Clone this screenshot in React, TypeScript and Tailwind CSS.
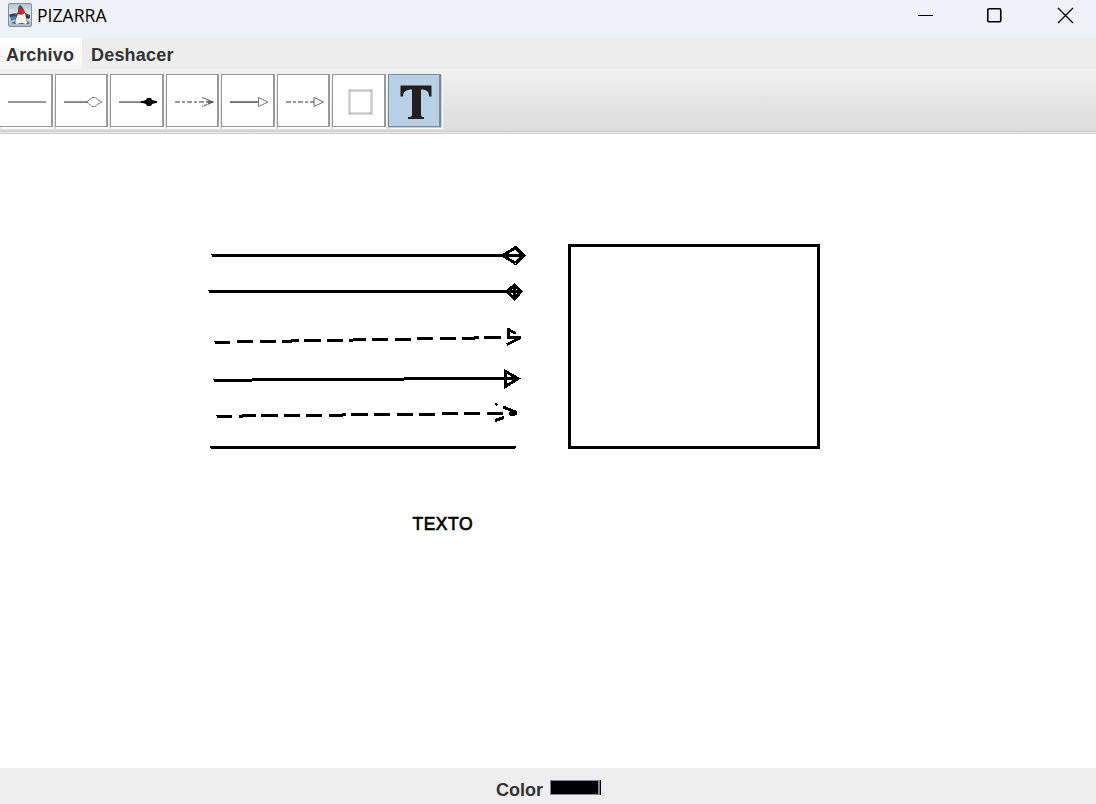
import React from "react";

function DukeIcon() {
  return (
    <svg width="24" height="24" viewBox="0 0 24 24" className="block shrink-0">
      <defs>
        <linearGradient id="sky" x1="0" y1="0" x2="0" y2="1">
          <stop offset="0" stopColor="#b3c3cf" />
          <stop offset="0.5" stopColor="#e4ebf0" />
          <stop offset="1" stopColor="#a5b5c2" />
        </linearGradient>
      </defs>
      <rect x="0.5" y="0.5" width="23" height="23" rx="1" fill="url(#sky)" stroke="#7894ad" />
      <path d="M2 13l5-2 1 5-5 2z" fill="#3c86ad" />
      <path d="M1 11.5l7-1.5-1 3-5 1z" fill="#39444b" />
      <path d="M12 2c2 1 4 4 5 8l5 2v3l-4-1 2 7H6l2-7-2-1 4-4c0-4 0-6 2-7z" fill="#4a4d4d" />
      <path d="M10 11c3 1 4 1 7-1l2 10c-1 2-3 0-5 0s-4 1-6 1c-2-2 1-7 2-10z" fill="#f1f1ee" />
      <path d="M18 12l4 2-1 2-3-1z" fill="#343434" />
      <circle cx="13.7" cy="8.5" r="2.7" fill="#e91e20" />
      <path d="M3 20l4-2v3zM19 18l3 2-2 1z" fill="#66747d" />
    </svg>
  );
}

const iconProps = { width: 52, height: 52, viewBox: "0 0 52 52", className: "block" };

function Tool({ selected = false, first = false, wide = false, children }: { selected?: boolean; first?: boolean; wide?: boolean; children: React.ReactNode }) {
  return (
    <button
      className={
        "block h-[53px] shrink-0 overflow-hidden border-y border-r-2 " +
        (wide ? "w-[54px] " : "w-[53px] ") +
        (first ? "" : "border-l ") +
        (selected
          ? "border-[#7a8a99] bg-[#b8cfe5] shadow-[1px_1px_0_#b8cfe5,2px_2px_0_#ffffff]"
          : "border-[#999999] bg-white shadow-[1px_2px_0_#ffffff]")
      }
    >
      {children}
    </button>
  );
}

function Toolbar() {
  return (
    <div className="flex h-[65px] shrink-0 bg-linear-to-b from-[#f1f1f1] to-[#dadada] pt-[5px] shadow-[inset_0_-1px_0_#cccccc,inset_0_-2px_0_#eeeeee,inset_0_-3px_0_#cccccc]">
      <div className="flex items-start">
        <Tool first>
          <svg {...iconProps}><path d="M8 27h38" stroke="#999" strokeWidth="2" shapeRendering="crispEdges" /></svg>
        </Tool>
        <div className="ml-[2px]"><Tool>
          <svg {...iconProps}>
            <path d="M8 27h23" stroke="#999" strokeWidth="2" shapeRendering="crispEdges" />
            <path d="M8 27.5h23" stroke="#777" strokeDasharray="3 1" />
            <path d="M30.5 27l3-2 2.5-2.5h3l3 2.5 4 2-4 2-3 2.5h-3l-2.5-2.5z" fill="#fff" stroke="#666" strokeDasharray="3 .5" />
          </svg>
        </Tool></div>
        <div className="ml-[2px]"><Tool wide>
          <svg {...iconProps}>
            <path d="M8 27h23" stroke="#999" strokeWidth="2" shapeRendering="crispEdges" />
            <path d="M8 27.5h23" stroke="#777" strokeDasharray="3 1" />
            <path d="M30 26h2l3-1 1-2h4l1 2 4 1h1v2h-1l-4 1-1 2h-4l-1-2-3-1h-2z" fill="#000" />
          </svg>
        </Tool></div>
        <div className="ml-[2px]"><Tool>
          <svg {...iconProps}>
            <path d="M8 27h32" stroke="#999" strokeWidth="2" strokeDasharray="5 2 3 2" />
            <path d="M35 22.5l11 4.5-11 4.5M39 27h7" fill="none" stroke="#777" strokeWidth="1.3" strokeDasharray="4 .5" />
            <path d="M41 26l5 1-5 1" fill="none" stroke="#555" />
          </svg>
        </Tool></div>
        <div className="ml-[2px]"><Tool wide>
          <svg {...iconProps}>
            <path d="M8 27h29" stroke="#888" strokeWidth="2" shapeRendering="crispEdges" />
            <path d="M8 27.5h29" stroke="#666" strokeDasharray="3 1" />
            <path d="M36.5 22.5v9l9.5-4.5z" fill="#fff" stroke="#777" />
          </svg>
        </Tool></div>
        <div className="ml-[2px]"><Tool>
          <svg {...iconProps}>
            <path d="M8 27h28" stroke="#777" strokeWidth="1.6" strokeDasharray="5 2 3 2" />
            <path d="M36 22.5v9l9.5-4.5z" fill="#fff" stroke="#666" />
          </svg>
        </Tool></div>
        <div className="ml-[2px]"><Tool wide>
          <svg {...iconProps}>
            <rect x="16.5" y="15.5" width="22" height="23" fill="none" stroke="#ccc" strokeWidth="2.5" />
            <path d="M16 15.5h2M37 15.5h2M16 38.5h2M37 38.5h2" stroke="#aaa" />
          </svg>
        </Tool></div>
        <div className="ml-[2px]"><Tool selected>
          <svg {...iconProps}>
            <path d="M11.5 10.5h31v11h-2.5c0-5-2-7-8-7v25c0 2 1 2.5 3 2.5v2H19v-2c3 0 4-.5 4-2.5v-25c-6 0-9 2-9 7h-2.500z" fill="#231f20" />
          </svg>
        </Tool></div>
      </div>
    </div>
  );
}

function Drawing() {
  return (
    <svg width="1096" height="634" viewBox="0 134 1096 634" className="block" shapeRendering="crispEdges">
      <g fill="none" stroke="#000" strokeWidth="3">
        <path d="M212 255.5H524M503 255.5L515.5 247.5L523.5 255.500L515.5 263.500Z" />
        <path d="M211 254.5h2M208 290.5h2" strokeWidth="1.500" />
        <path d="M209 291.5H520M514.5 285V299M507 291.5L514.5 285L521 291.5L514.5 299Z" />
        <path d="M215 342.5h15M237 341.5h16M260 341.5h16M282 341.5h10M291 340.5h8M304 340.5h17M327 340.5h16M349 340.5h4M353 339.5h13M372 339.5h16M395 339.5h16M417 338.5h16M440 338.5h16M462 338.5h13M474 337.5h5M484 337.5h17" />
        <path d="M508.5 328v8M508 329.5L516 333.5M507 337.5h14M507 344.5L521 337.500" />
        <path d="M214 380.5h38M252 379.5h152M404 378.5h114M505.5 371.5V386.5L518 378.5Z" />
        <path d="M217 416.5h15M239 416.5h4M242 415.5h14M261 415.5h17M284 415.5h16M306 415.5h16M329 415.5h14M342 414.5h4M351 414.5h17M374 414.5h16M397 414.5h16M419 414.5h16M442 413.5h16M464 413.5h16M487 413.5h16" />
        <path d="M503 407L517 412.5M509 413.500h8M510 414.5L517 412.5M495 420.5L504 417.5" />
        <path d="M211 447.5H515" />
        <rect x="569.5" y="245.5" width="249" height="202" strokeLinejoin="round" />
      </g>
      <path d="M214 341h2v1h-2zM213 379h2v1h-2zM216 415h2v1h-2zM210 446h2v2h-2zM515 446h1v2h-1zM509 412h8v3h-2v1h-4v-1h-2z" />
      <path d="M495 403h2v1h1v1h-1v1h-1v-1h-1z" />
      <text x="412.500" y="530" fontFamily="Liberation Sans, sans-serif" fontSize="17.500" textLength="60" lengthAdjust="spacing" stroke="#000" strokeWidth=".65">TEXTO</text>
    </svg>
  );
}

export default function App() {
  return (
    <main className="flex h-[804px] w-[1096px] flex-col overflow-hidden bg-white font-['Liberation_Sans',sans-serif]">
      <header className="flex h-[38px] shrink-0 justify-between bg-[#f0f2f8]">
        <div className="flex items-start pt-[3px] pl-2">
          <DukeIcon />
          <span className="ml-[5px] origin-left scale-x-[.978] font-['Open_Sans',sans-serif] text-[18px] leading-[24px] text-black">PIZARRA</span>
        </div>
        <div className="flex pt-[7px] pr-[22px]">
          <svg width="156" height="18" viewBox="0 0 156 18" fill="none" stroke="#000">
            <path d="M0 8.5h15" shapeRendering="crispEdges" />
            <rect x="69.75" y="1.75" width="13" height="13" rx="1.2" strokeWidth="1.6" />
            <path d="M140 1l15 15M155 1l-15 15" strokeWidth="1.3" />
          </svg>
        </div>
      </header>
      <nav className="flex h-[31px] shrink-0 bg-[#ededed] text-[18px] leading-[35px] font-bold text-[#333333]">
        <button className="h-[31px] w-[82px] bg-linear-to-b from-white to-[#f5f5f5] pl-[6px] text-left tracking-[0.15px]"><span>Archivo</span></button>
        <button className="h-[31px] pl-[9px] tracking-[0.2px]"><span>Deshacer</span></button>
      </nav>
      <Toolbar />
      <section className="h-[634px] shrink-0"><Drawing /></section>
      <footer className="flex h-9 shrink-0 bg-[#eeeeee] pl-[496px]">
        <span className="w-[54px] pt-[9px] text-[18px] leading-[27px] font-bold text-[#333333]">Color</span>
        <div className="mt-3 h-[15px] w-[51px] border-r border-black bg-black"><div className="h-[15px] w-[50px] border border-r-2 border-[#7a8a99] bg-black" /></div>
      </footer>
    </main>
  );
}
